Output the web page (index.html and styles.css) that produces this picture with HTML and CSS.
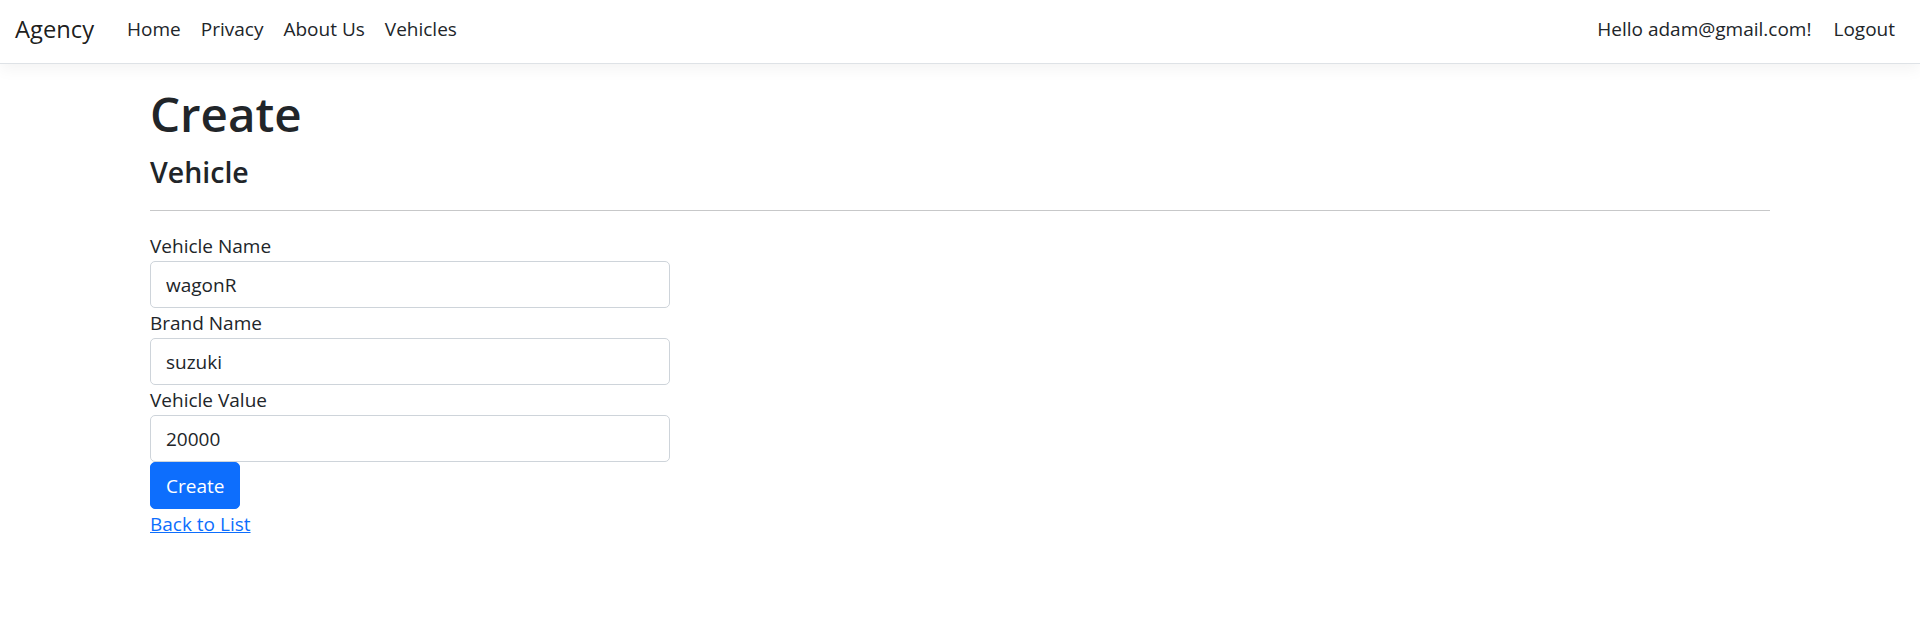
FILE: index.html
```html
<!DOCTYPE html>
<html lang="en">
<head>
<meta charset="utf-8">
<title>Create - Agency</title>
<link rel="stylesheet" href="styles.css">
</head>
<body>
<header>
  <nav class="navbar">
    <a class="brand" href="#">Agency</a>
    <ul class="nav nav-main">
      <li><a class="nav-link" href="#">Home</a></li>
      <li><a class="nav-link" href="#">Privacy</a></li>
      <li><a class="nav-link" href="#">About Us</a></li>
      <li><a class="nav-link" href="#">Vehicles</a></li>
    </ul>
    <ul class="nav nav-user">
      <li><a class="nav-link" href="#">Hello adam@gmail.com!</a></li>
      <li><a class="nav-link" href="#">Logout</a></li>
    </ul>
  </nav>
</header>
<div class="container">
  <main>
    <h1 class="title">Create</h1>
    <h4 class="subtitle">Vehicle</h4>
    <hr class="divider">
    <div class="form-col">
      <form>
        <div class="form-group">
          <label class="control-label" for="vn">Vehicle Name</label>
          <input class="form-control" id="vn" type="text" value="wagonR">
        </div>
        <div class="form-group">
          <label class="control-label" for="bn">Brand Name</label>
          <input class="form-control" id="bn" type="text" value="suzuki">
        </div>
        <div class="form-group">
          <label class="control-label" for="vv">Vehicle Value</label>
          <input class="form-control" id="vv" type="text" value="20000">
        </div>
        <div class="form-group">
          <button type="button" class="btn-primary">Create</button>
        </div>
      </form>
    </div>
    <div class="back">
      <a class="back-link" href="#">Back to List</a>
    </div>
  </main>
</div>
</body>
</html>
```

FILE: styles.css
```css
* { box-sizing: border-box; }
html { font-size: 20px; }
body {
  margin: 0;
  font-family: "Open Sans", "Noto Sans", sans-serif;
  font-size: 19px;
  line-height: 30px;
  color: #212529;
  background: #fff;
}
.navbar {
  display: flex;
  align-items: center;
  height: 64px;
  padding: 0 15px 5px;
  background: #fff;
  border-bottom: 1px solid #dee2e6;
  box-shadow: 0 5px 15px rgba(0,0,0,.05);
  margin-bottom: 20px;
}
.brand {
  font-size: 23.75px;
  line-height: 37px;
  color: rgba(0,0,0,.9);
  text-decoration: none;
  margin-right: 23px;
}
.nav {
  list-style: none;
  margin: 0;
  padding: 0;
  display: flex;
}
.nav-main { flex-grow: 1; }
.nav-link {
  display: block;
  padding: 10px 10px;
  color: #212529;
  text-decoration: none;
  font-size: 19px;
  line-height: 30px;
}
.nav-user li + li .nav-link { padding-left: 12px; }
.container {
  width: 1620px;
  margin: 0 auto;
}
.title {
  margin: 0 0 10px;
  font-size: 47.5px;
  line-height: 60px;
  font-weight: 600;
}
.subtitle {
  margin: 0 0 10px;
  font-size: 28.5px;
  line-height: 36px;
  font-weight: 600;
}
.divider {
  margin: 20px 0;
  border: 0;
  border-top: 1px solid #212529;
  opacity: .25;
}
.form-col { width: 520px; }
.control-label { display: block; }
.form-control {
  display: block;
  width: 100%;
  height: 47px;
  padding: 7px 15px;
  font-family: inherit;
  font-size: 19px;
  line-height: 30px;
  color: #212529;
  border: 1px solid #ced4da;
  border-radius: 5px;
  background: #fff;
}
.btn-primary {
  display: inline-block;
  height: 47px;
  padding: 7px 15px;
  font-family: inherit;
  font-size: 19px;
  line-height: 30px;
  color: #fff;
  background: #0d6efd;
  border: 1px solid #0d6efd;
  border-radius: 5px;
  vertical-align: top;
}
.form-group { line-height: 30px; }
.back { line-height: 30px; }
.back-link { color: #0d6efd; text-decoration: underline; }
```
